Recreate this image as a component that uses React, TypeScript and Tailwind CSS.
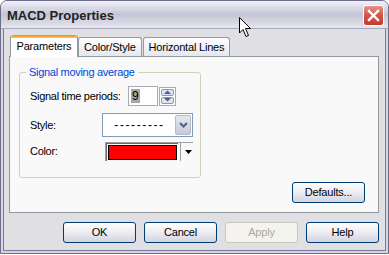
import React from "react";

const font = { fontFamily: '"Liberation Sans", Arial, sans-serif' };

const Tab = ({ label, active }: { label: string; active?: boolean }) =>
  active ? (
    <div className="relative z-10 -mb-px flex h-[22px] w-[68px] flex-col rounded-t-[3px] border-x border-[#919b9c] bg-white">
      <div className="h-[3px] rounded-t-[3px] bg-gradient-to-b from-[#e68b2c] to-[#ffc73c]" />
      <div className="flex flex-1 items-center justify-center pb-[2px] text-[11px] tracking-[-0.2px] text-black">
        {label}
      </div>
    </div>
  ) : (
    <div className="flex h-[19px] items-center justify-center rounded-t-[3px] border-x border-t border-[#919b9c] bg-gradient-to-b from-white to-[#e6e6ee] px-[5px] text-[11px] tracking-[-0.2px] text-black">
      {label}
    </div>
  );

const Button = ({
  label,
  disabled,
  className = "",
}: {
  label: string;
  disabled?: boolean;
  className?: string;
}) => (
  <div
    className={
      "flex h-[21px] items-center justify-center rounded-[3px] border text-[11px] tracking-[-0.2px] " +
      (disabled
        ? "border-[#c9c7ba] bg-[#f4f3ee] text-[#aca899] "
        : "border-[#003c74] bg-gradient-to-b from-white via-[#ececf2] to-[#d4d4e0] text-black ") +
      className
    }
  >
    {label}
  </div>
);

const App = () => {
  return (
    <div className="relative h-[255px] w-[389px] bg-white" style={font}>
      <div className="flex h-[254px] w-[389px] flex-col overflow-hidden rounded-t-[7px] border border-[#6e6e8c] bg-[#e0dfe3]">
        {/* title bar */}
        <div className="flex h-[28px] items-center justify-between border-b border-[#a8a8bc] bg-gradient-to-b from-[#f2f2f8] via-[#c4c4d6] to-[#e6e6ee] pl-[6px] pr-[4px] pt-[2px]">
          <span className="text-[13px] font-bold text-[#222]">MACD Properties</span>
          <div className="flex h-[21px] w-[21px] items-center justify-center rounded-[3px] border border-white bg-gradient-to-b from-[#e8928a] via-[#d0554a] to-[#c23c30]">
            <svg width="13" height="13" viewBox="0 0 13 13">
              <path d="M2 2 L11 11 M11 2 L2 11" stroke="white" strokeWidth="2.4" strokeLinecap="square" />
            </svg>
          </div>
        </div>

        {/* frame */}
        <div className="flex flex-1 flex-col border-x-2 border-b-2 border-[#d6d6e2]">
          <div className="flex flex-1 flex-col border-x border-b border-[#7b7b9b] bg-[#e0dfe3] pl-[5px] pr-[6px] pt-[6px]">
            <div className="flex h-[21px] items-end pl-px">
              <Tab label="Parameters" active />
              <div className="flex">
                <Tab label="Color/Style" />
                <div className="w-px" />
                <Tab label="Horizontal Lines" />
              </div>
            </div>

            <div className="flex h-[157px] flex-col border border-[#919b9c] bg-[#f9f9fa] pl-[9px] pt-[9px]">
              <fieldset className="w-[182px] rounded-[3px] border border-[#d0d0bf] pb-[16px] pl-[10px] pr-[7px]">
                <legend className="-ml-[4px] px-[3px] text-[11px] leading-[13px] tracking-[-0.3px] text-[#0046d5]">
                  Signal moving average
                </legend>

                <div className="mt-[7px] flex h-[20px] items-center">
                  <span className="w-[98px] text-[11px] tracking-[-0.3px] text-black">Signal time periods:</span>
                  <div className="flex h-[20px] w-[30px] items-center border border-[#a5acb5] bg-white pl-[2px]">
                    <span className="bg-[#a6a6a6] px-px text-[12px] leading-[14px] text-black">9</span>
                  </div>
                  <div className="ml-[1px] flex h-[19px] w-[17px] flex-col gap-px border border-[#a5acb5] bg-white p-px">
                    <div className="flex flex-1 items-center justify-center rounded-[2px] border border-[#8c97b5] bg-[#dfe4f2]">
                      <svg width="7" height="4" viewBox="0 0 7 4">
                        <path d="M0 4 L3.5 0.5 L7 4Z" fill="#4d6185" />
                      </svg>
                    </div>
                    <div className="flex flex-1 items-center justify-center rounded-[2px] border border-[#8c97b5] bg-[#dfe4f2]">
                      <svg width="7" height="4" viewBox="0 0 7 4">
                        <path d="M0 0 L3.5 3.5 L7 0Z" fill="#4d6185" />
                      </svg>
                    </div>
                  </div>
                </div>

                <div className="mt-[7px] flex h-[24px] items-center">
                  <span className="w-[72px] text-[11px] tracking-[-0.3px] text-black">Style:</span>
                  <div className="flex h-[24px] w-[91px] items-stretch border border-[#7f9db9] bg-white">
                    <div className="flex flex-1 items-center justify-center pl-[2px] text-[12px] tracking-[1.6px] text-black">
                      ---------
                    </div>
                    <div className="m-px flex w-[16px] items-center justify-center rounded-[2px] border border-[#b4b9cc] bg-gradient-to-b from-[#e6e8f0] to-[#c6cad8]">
                      <svg width="9" height="6" viewBox="0 0 9 6">
                        <path d="M1 1 L4.5 4.5 L8 1" stroke="#4d6185" strokeWidth="2" fill="none" />
                      </svg>
                    </div>
                  </div>
                </div>

                <div className="mt-[5px] flex h-[19px] items-center">
                  <span className="w-[75px] text-[11px] tracking-[-0.3px] text-black">Color:</span>
                  <div className="flex h-[19px] w-[88px] items-stretch border-l border-t border-[#a0a0a0] border-b-white border-r-white">
                    <div className="flex flex-1 border-l border-t border-[#696969] p-px">
                      <div className="flex-1 border border-black bg-[#ff0000]" />
                    </div>
                    <div className="mx-[2px] w-px bg-[#a0a0a0]" />
                    <div className="flex w-[10px] items-center justify-center">
                      <svg width="7" height="4" viewBox="0 0 7 4">
                        <path d="M0 0 L7 0 L3.5 4Z" fill="black" />
                      </svg>
                    </div>
                  </div>
                </div>
              </fieldset>

              <div className="mt-auto mb-[9px] flex justify-end pr-[13px]">
                <Button label="Defaults..." className="w-[73px]" />
              </div>
            </div>

            <div className="mt-[9px] flex justify-end gap-[8px]">
              <Button label="OK" className="w-[73px]" />
              <Button label="Cancel" className="w-[73px]" />
              <Button label="Apply" disabled className="w-[73px]" />
              <Button label="Help" className="w-[73px]" />
            </div>
          </div>
        </div>
      </div>

      {/* mouse pointer */}
      <svg className="absolute left-[239px] top-[17px]" width="13" height="21" viewBox="0 0 13 21">
        <path d="M0.5 0.5 L0.5 16 L4 12.5 L7 19.5 L9.5 18.5 L6.5 11.5 L11.5 11.5 Z" fill="white" stroke="black" strokeWidth="1" />
      </svg>
    </div>
  );
};

export default App;
